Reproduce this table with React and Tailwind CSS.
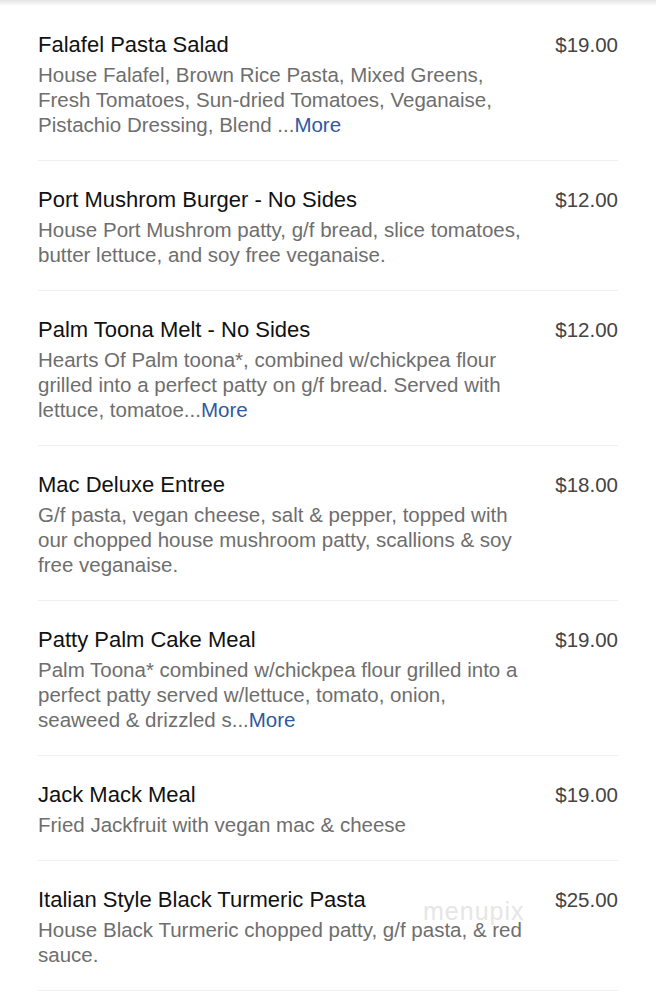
const items = [
  {
    name: 'Falafel Pasta Salad',
    price: '$19.00',
    lines: [
      'House Falafel, Brown Rice Pasta, Mixed Greens,',
      'Fresh Tomatoes, Sun-dried Tomatoes, Veganaise,',
      'Pistachio Dressing, Blend ...',
    ],
    more: true,
  },
  {
    name: 'Port Mushrom Burger - No Sides',
    price: '$12.00',
    lines: [
      'House Port Mushrom patty, g/f bread, slice tomatoes,',
      'butter lettuce, and soy free veganaise.',
    ],
  },
  {
    name: 'Palm Toona Melt - No Sides',
    price: '$12.00',
    lines: [
      'Hearts Of Palm toona*, combined w/chickpea flour',
      'grilled into a perfect patty on g/f bread. Served with',
      'lettuce, tomatoe...',
    ],
    more: true,
  },
  {
    name: 'Mac Deluxe Entree',
    price: '$18.00',
    lines: [
      'G/f pasta, vegan cheese, salt & pepper, topped with',
      'our chopped house mushroom patty, scallions & soy',
      'free veganaise.',
    ],
  },
  {
    name: 'Patty Palm Cake Meal',
    price: '$19.00',
    lines: [
      'Palm Toona* combined w/chickpea flour grilled into a',
      'perfect patty served w/lettuce, tomato, onion,',
      'seaweed & drizzled s...',
    ],
    more: true,
  },
  {
    name: 'Jack Mack Meal',
    price: '$19.00',
    lines: ['Fried Jackfruit with vegan mac & cheese'],
  },
  {
    name: 'Italian Style Black Turmeric Pasta',
    price: '$25.00',
    lines: [
      'House Black Turmeric chopped patty, g/f pasta, & red',
      'sauce.',
    ],
    watermark: true,
  },
]

function MenuItem({ item }) {
  return (
    <div className="relative flex justify-between border-b border-[#f0f0f0] pt-[26px] pb-[23px]">
      <div className="flex flex-col gap-[4px]">
        <div className="text-[22px] leading-[26px] text-[#111]">{item.name}</div>
        <div className="text-[20.5px] leading-[25px] text-[#6e6e6e]">
          {item.lines.map((l, i) => (
            <div key={i} className="whitespace-nowrap">
              {l}
              {item.more && i === item.lines.length - 1 && <span className="text-[#2d5aa0]">More</span>}
            </div>
          ))}
        </div>
      </div>
      <div className="text-[20.5px] leading-[26px] text-[#444]">{item.price}</div>
      {item.watermark && (
        <div className="pointer-events-none absolute left-[385px] top-[37px] text-[25px] leading-[26px] tracking-[1px] text-[#e6e6e6]">
          menupix
        </div>
      )}
    </div>
  )
}

export default function App() {
  return (
    <div className="min-h-[1000px] w-[656px] bg-white font-['Liberation_Sans',Arial,sans-serif]">
      <div className="h-[6px] bg-gradient-to-b from-[#e4e4e4] to-white" />
      <div className="px-[38px]">
        {items.map((item, i) => (
          <MenuItem key={i} item={item} />
        ))}
      </div>
    </div>
  )
}
